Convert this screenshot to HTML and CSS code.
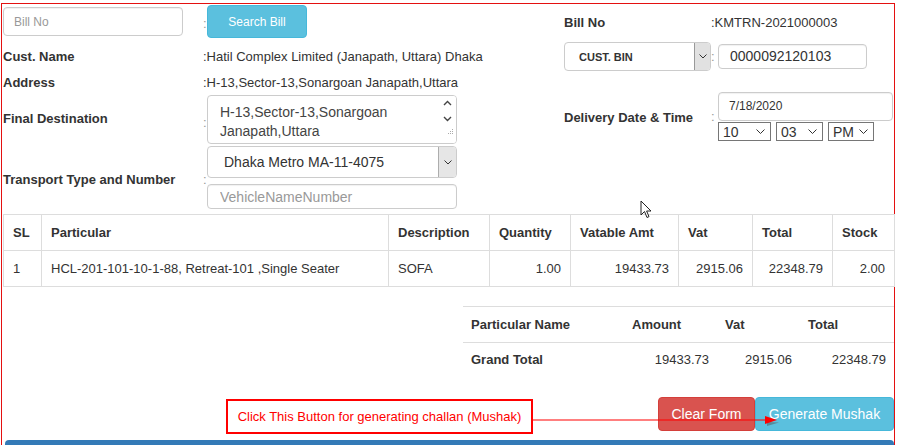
FILE: index.html
```html
<!DOCTYPE html>
<html lang="en">
<head>
    <meta charset="UTF-8">
    <title>Delivery Challan</title>
    <link rel="stylesheet" href="styles.css">
</head>
<body>
    <div class="frame">
        <div class="top">
            <!-- left side of the header form -->
            <div class="form-left">
                <div class="cell-first">
                    <input class="form-input bill-input" placeholder="Bill No">
                </div>
                <span class="colon colon-top">:</span>
                <div class="cell-first">
                    <button class="btn btn-info btn-search">Search Bill</button>
                </div>

                <div class="label">Cust. Name</div>
                <div class="value">:Hatil Complex Limited (Janapath, Uttara) Dhaka</div>

                <div class="label">Address</div>
                <div class="value">:H-13,Sector-13,Sonargoan Janapath,Uttara</div>

                <div class="label label-dest">Final Destination</div>
                <span class="colon colon-low">:</span>
                <div class="textarea">
                    <div class="textarea-text">H-13,Sector-13,Sonargoan Janapath,Uttara</div>
                    <div class="textarea-scroll">
                        <svg width="9" height="6" viewBox="0 0 9 6"><polyline points="1,5 4.5,1.5 8,5" fill="none" stroke="#444" stroke-width="1.4"/></svg>
                        <svg width="9" height="6" viewBox="0 0 9 6"><polyline points="1,1 4.5,4.5 8,1" fill="none" stroke="#444" stroke-width="1.4"/></svg>
                        <svg class="grip" width="7" height="7" viewBox="0 0 7 7"><g fill="#aaa"><rect x="5" y="1" width="1" height="1"/><rect x="3" y="3" width="1" height="1"/><rect x="5" y="3" width="1" height="1"/><rect x="1" y="5" width="1" height="1"/><rect x="3" y="5" width="1" height="1"/><rect x="5" y="5" width="1" height="1"/></g></svg>
                    </div>
                </div>

                <div class="label label-transport">Transport Type and Number</div>
                <span class="colon colon-transport">:</span>
                <div class="select select-vehicle">
                    <span>Dhaka Metro MA-11-4075</span>
                    <span class="select-arrow">
                        <svg width="8" height="5" viewBox="0 0 8 5"><polyline points="0.5,0.5 4,4 7.5,0.5" fill="none" stroke="#333" stroke-width="1"/></svg>
                    </span>
                </div>
                <input class="form-input vehicle-input" placeholder="VehicleNameNumber">
            </div>

            <!-- right side of the header form -->
            <div class="form-right">
                <div class="label label-bill">Bill No</div>
                <div class="value value-bill">:KMTRN-2021000003</div>

                <div class="select select-bin">
                    <span>CUST. BIN</span>
                    <span class="select-arrow">
                        <svg width="8" height="5" viewBox="0 0 8 5"><polyline points="0.5,0.5 4,4 7.5,0.5" fill="none" stroke="#333" stroke-width="1"/></svg>
                    </span>
                </div>
                <span class="colon colon-bin">:</span>
                <div class="form-input bin-input">0000092120103</div>

                <div class="label label-delivery">Delivery Date &amp; Time</div>
                <span class="colon colon-delivery">:</span>
                <div class="delivery">
                    <div class="form-input date-input">7/18/2020</div>
                    <div class="time-row">
                        <div class="time-select time-hour">10<svg width="9" height="5" viewBox="0 0 9 5"><polyline points="0.5,0.5 4.5,4.5 8.5,0.5" fill="none" stroke="#333" stroke-width="1"/></svg></div>
                        <div class="time-select time-min">03<svg width="9" height="5" viewBox="0 0 9 5"><polyline points="0.5,0.5 4.5,4.5 8.5,0.5" fill="none" stroke="#333" stroke-width="1"/></svg></div>
                        <div class="time-select time-ampm">PM<svg width="9" height="5" viewBox="0 0 9 5"><polyline points="0.5,0.5 4.5,4.5 8.5,0.5" fill="none" stroke="#333" stroke-width="1"/></svg></div>
                    </div>
                </div>
            </div>
        </div>

        <table class="items">
            <colgroup>
                <col class="c-sl"><col class="c-part"><col class="c-desc"><col class="c-qty">
                <col class="c-vamt"><col class="c-vat"><col class="c-total"><col class="c-stock">
            </colgroup>
            <thead>
                <tr>
                    <th>SL</th><th>Particular</th><th>Description</th><th>Quantity</th>
                    <th>Vatable Amt</th><th>Vat</th><th>Total</th><th>Stock</th>
                </tr>
            </thead>
            <tbody>
                <tr>
                    <td>1</td>
                    <td>HCL-201-101-10-1-88, Retreat-101 ,Single Seater</td>
                    <td>SOFA</td>
                    <td class="num">1.00</td>
                    <td class="num">19433.73</td>
                    <td class="num">2915.06</td>
                    <td class="num">22348.79</td>
                    <td class="num">2.00</td>
                </tr>
            </tbody>
        </table>

        <table class="summary">
            <colgroup>
                <col class="s-name"><col class="s-amt"><col class="s-vat"><col class="s-total">
            </colgroup>
            <tr>
                <th>Particular Name</th><th>Amount</th><th>Vat</th><th>Total</th>
            </tr>
            <tr>
                <th>Grand Total</th>
                <td class="num">19433.73</td>
                <td class="num">2915.06</td>
                <td class="num">22348.79</td>
            </tr>
        </table>

        <div class="actions">
            <button class="btn btn-danger btn-clear">Clear Form</button>
            <button class="btn btn-info btn-generate">Generate Mushak</button>
        </div>

        <div class="panel-bar"></div>

        <!-- screenshot annotation -->
        <div class="note">Click This Button for generating challan (Mushak)</div>
        <svg class="note-arrow" width="250" height="14" viewBox="0 0 250 14">
            <path d="M234,9 L246,9.5 L234,13 Z" fill="#555" opacity="0.5"/>
            <line x1="0" y1="7" x2="236" y2="7" stroke="#f00" stroke-width="1.2"/>
            <path d="M232,3 L244,7 L232,11 Z" fill="#f00"/>
        </svg>

        <!-- mouse pointer -->
        <svg class="pointer" width="14" height="20" viewBox="0 0 14 20">
            <path d="M1,1 L1,15 L4.5,11.5 L7,17.5 L9,16.6 L6.6,11 L11,11 Z" fill="#fff" stroke="#222" stroke-width="1"/>
        </svg>
    </div>
</body>
</html>
```

FILE: styles.css
```css
* {
    box-sizing: border-box;
}

body {
    margin: 0;
    font-family: "Liberation Sans", Arial, sans-serif;
    font-size: 13px;
    color: #333;
    background-color: #fff;
    overflow: hidden;
}

.frame {
    position: relative;
    width: 894px;
    min-height: 460px;
    margin: 3px 0 0 1px;
    padding: 1px 0 0 1px;
    border: 1px solid #e41010;
    border-bottom: 0;
}

.top {
    display: grid;
    grid-template-columns: 455px 1fr;
    column-gap: 106px;
    align-items: start;
}

/* left form */
.form-left {
    display: grid;
    grid-template-columns: 200px 4px 250px;
    align-items: center;
}

.form-right {
    display: grid;
    grid-template-columns: 147px 7px 175px;
    align-items: center;
}

.cell-first {
    height: 38px;
    align-self: start;
}

.label {
    font-weight: bold;
    line-height: 25px;
    padding-top: 1px;
}

.value {
    grid-column: 2 / 4;
    line-height: 25px;
    padding-top: 1px;
    white-space: nowrap;
}

.colon {
    color: #999;
    font-size: 13px;
}

.colon-top {
    align-self: start;
    margin-top: 11px;
}

.colon-low {
    margin-top: 6px;
}

.form-input {
    display: block;
    border: 1px solid #ccc;
    border-radius: 4px;
    font-family: "Liberation Sans", Arial, sans-serif;
    color: #555;
    background-color: #fff;
    box-shadow: inset 0 1px 1px rgba(0, 0, 0, 0.06);
}

.form-input::placeholder {
    color: #999;
}

.bill-input {
    width: 180px;
    height: 29px;
    margin-top: 2px;
    padding: 0 10px;
    font-size: 12px;
}

.btn {
    border: 1px solid transparent;
    border-radius: 4px;
    color: #fff;
    font-family: "Liberation Sans", Arial, sans-serif;
    cursor: pointer;
}

.btn-info {
    background-color: #5bc0de;
    border-color: #46b8da;
}

.btn-danger {
    background-color: #d9534f;
    border-color: #d43f3a;
}

.btn-search {
    width: 100px;
    height: 33px;
    font-size: 12px;
    padding: 0;
}

/* fake textarea with its scrollbar */
.textarea {
    grid-column: 3;
    display: flex;
    height: 49px;
    border: 1px solid #ccc;
    border-radius: 4px;
    overflow: hidden;
}

.textarea-text {
    flex: 1;
    padding: 7px 0 0 12px;
    font-size: 14px;
    line-height: 19px;
    color: #444;
}

.textarea-scroll {
    width: 18px;
    display: flex;
    flex-direction: column;
    align-items: center;
    padding-top: 4px;
    gap: 10px;
    background-color: #fff;
}

.textarea-scroll .grip {
    margin: -4px 0 0 6px;
}

.label-dest {
    margin-top: -4px;
}

.select {
    display: flex;
    align-items: center;
    justify-content: space-between;
    border: 1px solid #ccc;
    border-radius: 4px;
    background-color: #fff;
    overflow: hidden;
}

.select-arrow {
    display: flex;
    align-items: center;
    justify-content: center;
    align-self: stretch;
    background-color: #e6e6e6;
    border-left: 1px solid #adadad;
}

.select-vehicle {
    grid-column: 3;
    height: 32px;
    margin-top: 2px;
    padding-left: 16px;
    font-size: 14px;
}

.select-vehicle .select-arrow {
    width: 18px;
}

.label-transport {
    grid-row: 5 / 7;
    grid-column: 1;
    align-self: center;
    margin-top: 4px;
}

.colon-transport {
    grid-row: 5 / 7;
    grid-column: 2;
    margin-top: 6px;
}

.vehicle-input {
    grid-column: 3;
    height: 25px;
    margin-top: 6px;
    padding: 0 12px;
    font-size: 14px;
    width: 250px;
}

/* right form */
.label-bill,
.value-bill {
    line-height: 33px;
    padding-top: 1px;
}

.select-bin {
    height: 29px;
    margin-top: 3px;
    padding-left: 14px;
    font-size: 11px;
    font-weight: bold;
}

.select-bin .select-arrow {
    width: 16px;
    background-color: #e1e1e1;
    border-left: 1px solid #999;
}

.colon-bin {
    margin-top: 3px;
    color: #999;
}

.bin-input {
    width: 149px;
    height: 25px;
    margin-top: 3px;
    padding: 0 11px;
    font-size: 14px;
    line-height: 23px;
    color: #333;
}

.label-delivery {
    margin-top: 22px;
}

.colon-delivery {
    margin-top: 21px;
}

.delivery {
    margin-top: 21px;
}

.date-input {
    height: 29px;
    padding: 0 10px;
    font-size: 12px;
    line-height: 27px;
    color: #333;
}

.time-row {
    display: flex;
    gap: 5px;
    margin-top: 1px;
}

.time-select {
    display: flex;
    align-items: center;
    justify-content: space-between;
    height: 19px;
    padding: 0 5px 0 4px;
    border: 1px solid #767676;
    font-size: 14px;
    color: #333;
}

.time-hour {
    width: 53px;
}

.time-min {
    width: 47px;
}

.time-ampm {
    width: 46px;
}

/* items table */
.items {
    width: 891px;
    margin-top: 5px;
    border-collapse: collapse;
    table-layout: fixed;
}

.items th,
.items td {
    border: 1px solid #ddd;
    padding: 8px 9px;
    line-height: 19px;
    text-align: left;
    white-space: nowrap;
}

.items th {
    font-weight: bold;
}

.items .num,
.summary .num {
    text-align: right;
}

.c-sl { width: 38px; }
.c-part { width: 347px; }
.c-desc { width: 101px; }
.c-qty { width: 81px; }
.c-vamt { width: 108px; }
.c-vat { width: 74px; }
.c-total { width: 80px; }
.c-stock { width: 62px; }

/* summary table */
.summary {
    width: 431px;
    margin: 19px 0 0 auto;
    border-collapse: collapse;
    table-layout: fixed;
}

.summary th,
.summary td {
    border-top: 1px solid #ddd;
    padding: 8px;
    line-height: 19px;
    text-align: left;
    white-space: nowrap;
}

.summary tr + tr th,
.summary tr + tr td {
    padding: 7px 8px 9px;
}

.s-name { width: 161px; }
.s-amt { width: 93px; }
.s-vat { width: 83px; }
.s-total { width: 94px; }

.actions {
    display: flex;
    justify-content: flex-end;
    margin-top: 19px;
}

.btn-clear,
.btn-generate {
    height: 34px;
    font-size: 14px;
    padding: 0;
}

.btn-clear {
    width: 97px;
}

.btn-generate {
    width: 139px;
}

.panel-bar {
    height: 12px;
    margin: 9px 0 0 2px;
    background-color: #337ab7;
    border-radius: 4px 4px 0 0;
}

/* annotation overlays */
.note {
    position: absolute;
    left: 224px;
    top: 395px;
    width: 307px;
    height: 35px;
    border: 2px solid #f00;
    background-color: #fff;
    color: #f00;
    font-size: 13px;
    line-height: 31px;
    text-align: center;
}

.note-arrow {
    position: absolute;
    left: 531px;
    top: 409px;
}

.pointer {
    position: absolute;
    left: 638px;
    top: 196px;
}
```
